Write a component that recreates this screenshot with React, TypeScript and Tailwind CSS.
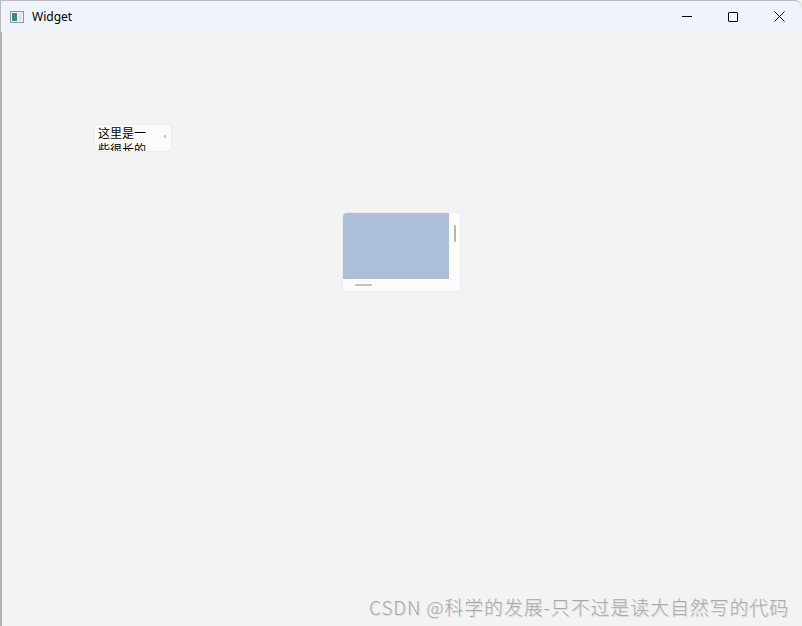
import React from "react";

const font = { fontFamily: '"Noto Sans", "Noto Sans CJK SC", sans-serif' };

function AppIcon() {
  return (
    <svg width="14" height="12" viewBox="0 0 14 12">
      <rect x="0.5" y="0.5" width="13" height="11" fill="#f4f6f8" stroke="#8a96a3" />
      <rect x="2" y="2" width="5" height="8" fill="#3c8a86" />
      <rect x="8" y="2" width="4" height="8" fill="#dfe6ea" />
    </svg>
  );
}

function ScrollCard() {
  return (
    <div className="w-[117px] h-[78px] rounded-[4px] bg-[#fbfbfb] shadow-[0_0_0_1px_#ececec] flex flex-col overflow-hidden">
      <div className="flex h-[66px]">
        <div className="w-[106px] h-[66px] bg-[#adbfd8]" />
        <div className="flex-1 flex justify-center pt-[12px]">
          <div className="w-[2px] h-[17px] rounded-full bg-[#b5b5b5]" />
        </div>
      </div>
      <div className="flex-1 pl-[12px] pt-[5px]">
        <div className="w-[17px] h-[2px] rounded-full bg-[#c2c2c2]" />
      </div>
    </div>
  );
}

export default function App() {
  return (
    <div className="w-[802px] h-[626px] bg-[#f3f3f3] flex flex-col overflow-hidden" style={font}>
      <div className="h-[32px] bg-[#eff3fa] flex items-center rounded-tr-[8px] border-l border-t border-[#b9bcc2]">
        <div className="pl-[9px] pr-[8px] flex items-center">
          <AppIcon />
        </div>
        <span className="text-[12px] text-black">Widget</span>
        <div className="ml-auto flex items-center h-full">
          <div className="w-[46px] h-full flex items-center justify-center">
            <div className="w-[10px] h-[1px] bg-black" />
          </div>
          <div className="w-[46px] h-full flex items-center justify-center">
            <div className="w-[10px] h-[10px] border border-black rounded-[1px]" />
          </div>
          <div className="w-[46px] h-full flex items-center justify-center">
            <svg width="11" height="11" viewBox="0 0 11 11">
              <path d="M0.5 0.5 L10.5 10.5 M10.5 0.5 L0.5 10.5" stroke="#000" strokeWidth="1" />
            </svg>
          </div>
        </div>
      </div>
      <div className="flex-1 flex border-l-2 border-[#b0b0b0]">
        <div className="flex-1 flex flex-col">
          <div className="pl-[92px] pt-[92px]">
            <div className="w-[78px] h-[28px] rounded-[4px] bg-[#fbfbfb] border border-[#ececec] flex overflow-hidden">
              <div className="pl-[3px] pt-[1px] text-[12px] leading-[16px] text-black w-[52px]">
                这里是一些很长的文字
              </div>
              <div className="ml-auto pr-[5px] pt-[10px]">
                <div className="w-[2px] h-[3px] bg-[#c8c8c8]" />
              </div>
            </div>
          </div>
          <div className="pl-[341px] pt-[61px]">
            <ScrollCard />
          </div>
          <div className="mt-auto flex justify-end pr-[13px] pb-[5px]">
            <span
              className="text-[19px] font-light text-[#a9a9a9] tracking-[0.85px]"
              style={{ fontFamily: '"Noto Sans CJK SC", sans-serif', textShadow: "1px 1px 0 #dcdcdc" }}
            >
              CSDN @科学的发展-只不过是读大自然写的代码
            </span>
          </div>
        </div>
      </div>
    </div>
  );
}
